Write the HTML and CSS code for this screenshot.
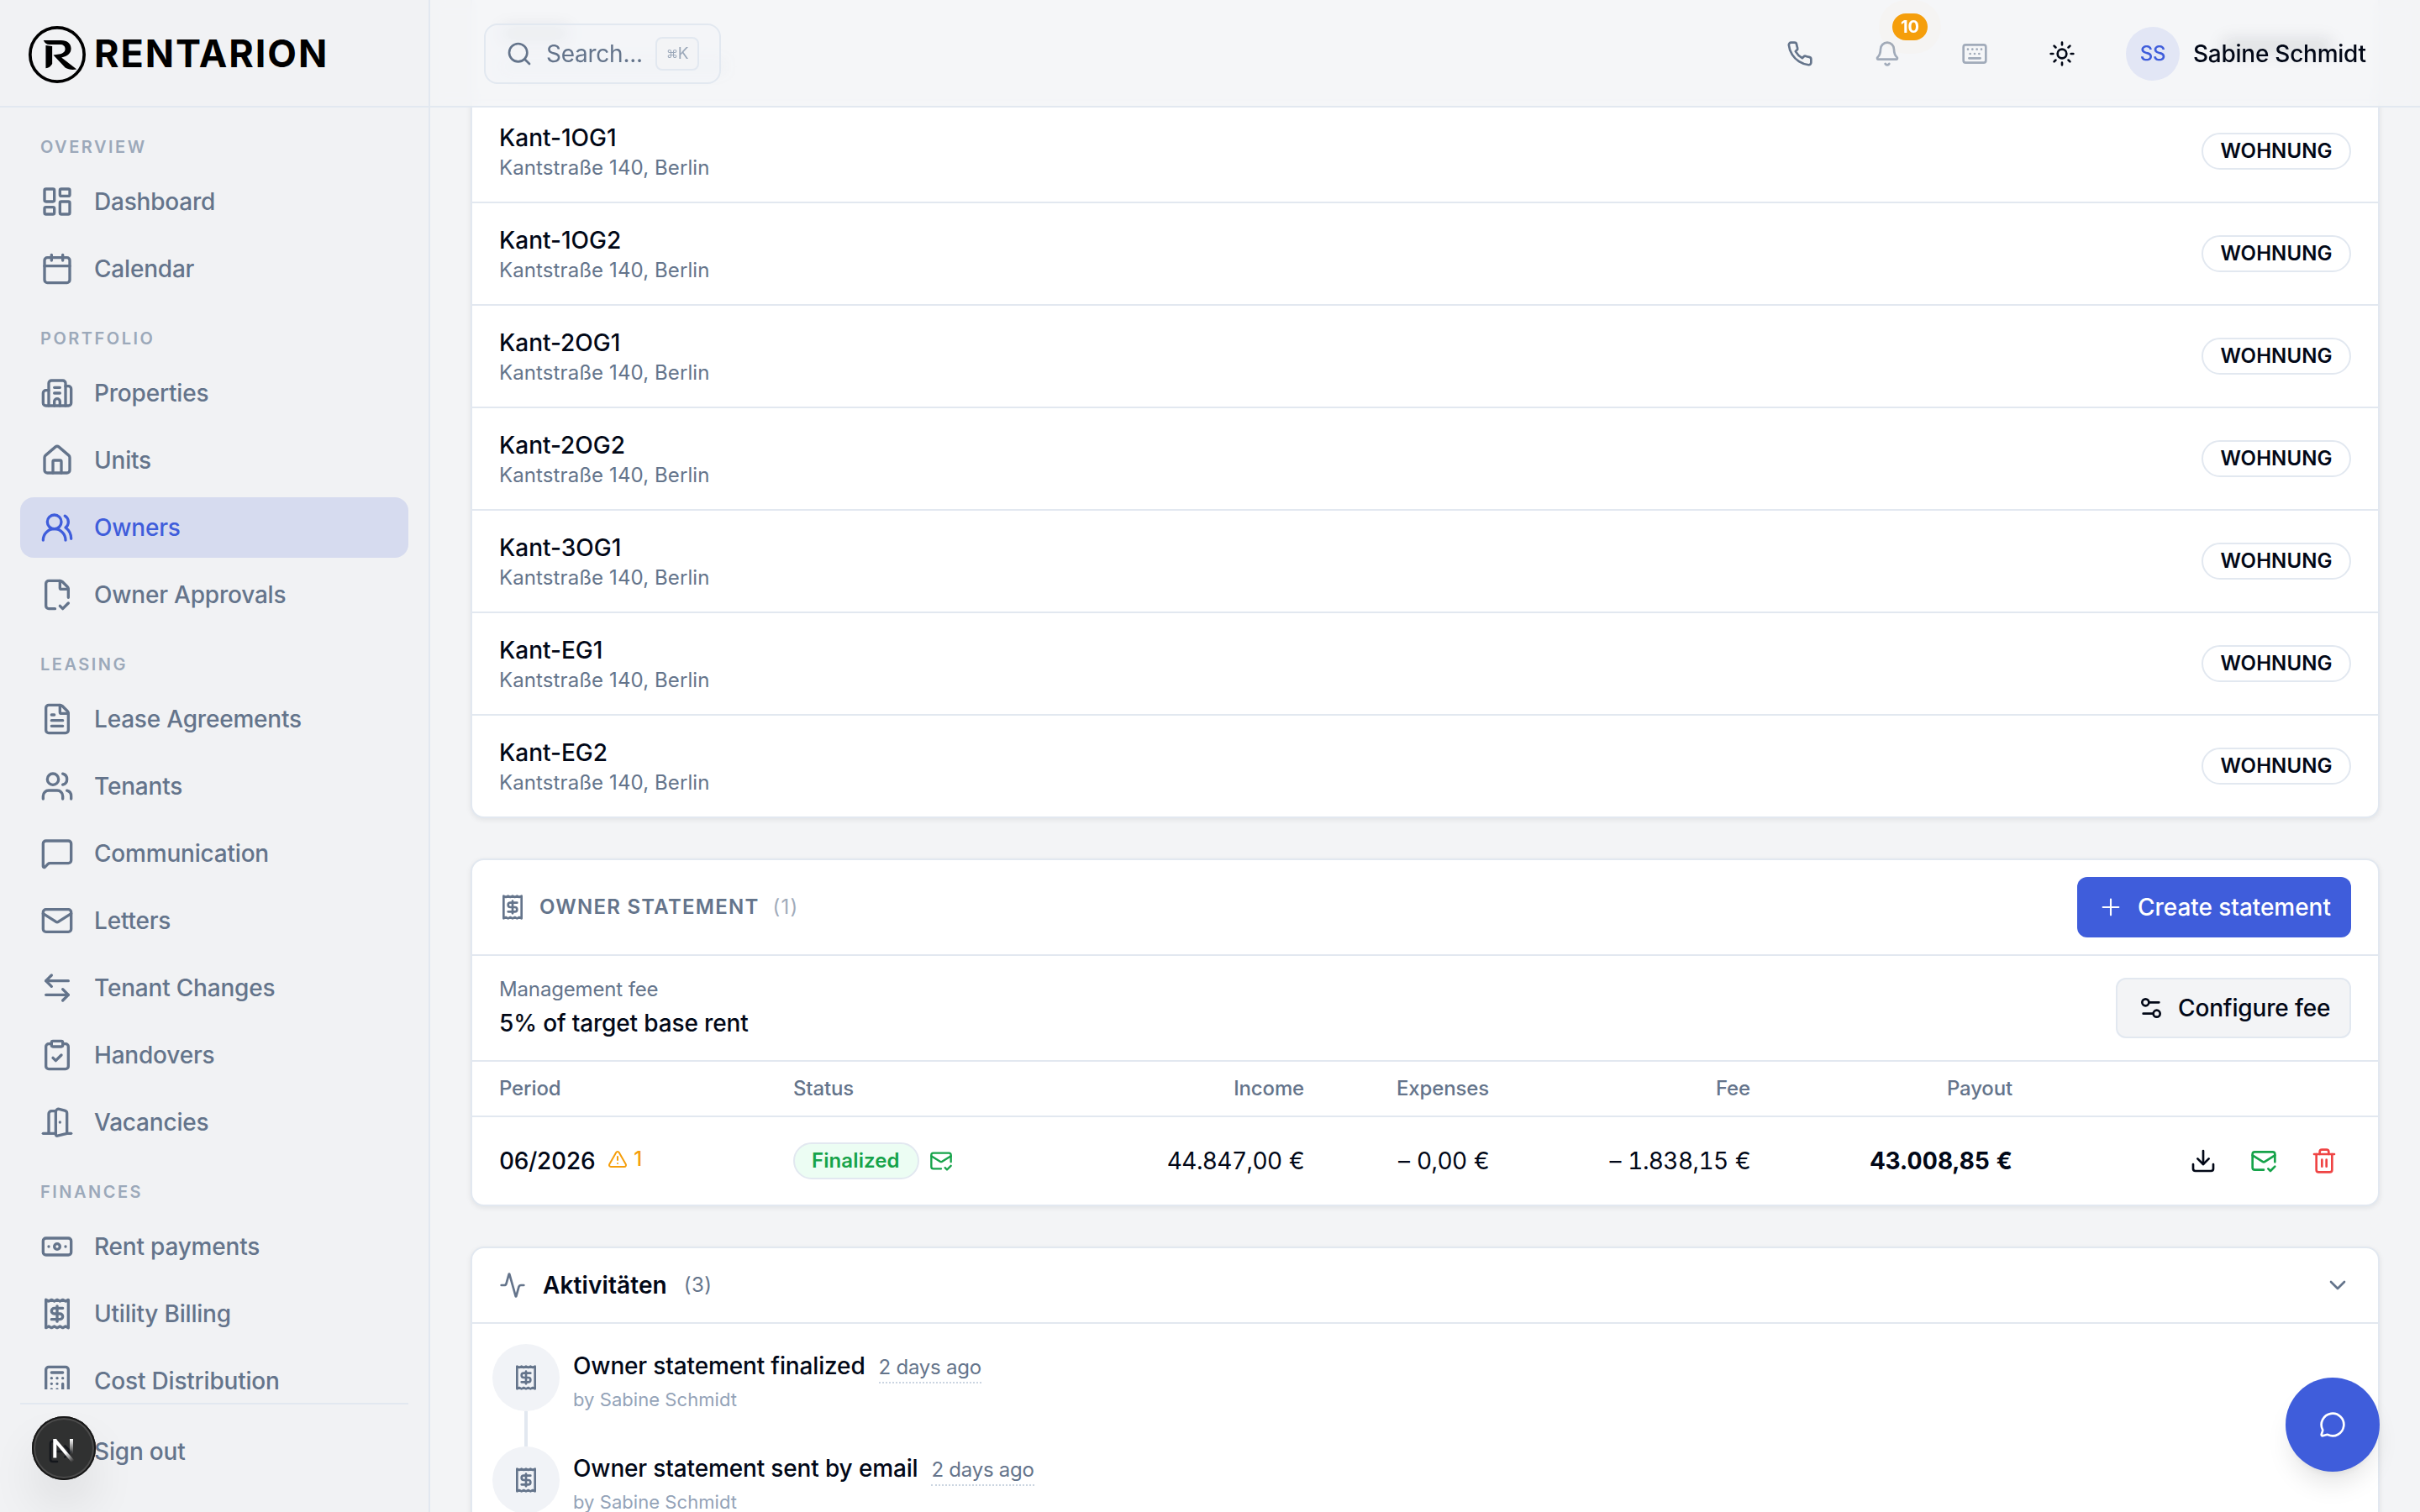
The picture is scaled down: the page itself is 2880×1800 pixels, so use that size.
FILE: index.html
```html
<!DOCTYPE html>
<html lang="en">
<head>
    <meta charset="UTF-8">
    <meta name="viewport" content="width=device-width, initial-scale=1.0">
    <title>Rentarion - Owners</title>
    <link rel="stylesheet" href="styles.css">
</head>
<body>
    <!-- Icons used more than once -->
    <svg class="sprite">
        <symbol id="i-receipt" viewBox="0 0 24 24"><path d="M4 2v20l2-1 2 1 2-1 2 1 2-1 2 1 2-1 2 1V2l-2 1-2-1-2 1-2-1-2 1-2-1-2 1Z"/><path d="M16 8h-6a2 2 0 1 0 0 4h4a2 2 0 1 1 0 4H8"/><path d="M12 17.5v-11"/></symbol>
        <symbol id="i-mailcheck" viewBox="0 0 24 24"><path d="M22 13V6a2 2 0 0 0-2-2H4a2 2 0 0 0-2 2v12c0 1.1.9 2 2 2h8"/><path d="m22 7-8.97 5.7a1.94 1.94 0 0 1-2.06 0L2 7"/><path d="m16 19 2 2 4-4"/></symbol>
    </svg>

    <div class="app">
        <aside class="sidebar">
            <div class="logo">
                <svg class="logo-mark" viewBox="0 0 203 203">
                    <circle cx="101.5" cy="101.5" r="96"/>
                    <path d="M53 51h62c23 0 36 12 36 29 0 17-13 28-34 32l54 42c-16 3-30 1-41-6L88 103l20-3c15-3 22-9 22-19 0-9-7-15-18-15H74c-10 0-16-5-21-15Z"/>
                    <path d="M61 69l23 3v62c-5 9-13 15-23 16Z"/>
                </svg>
                <span class="logo-text">RENTARION</span>
            </div>

            <nav class="menu">
                <p class="menu-label">OVERVIEW</p>
                <a class="menu-item"><svg viewBox="0 0 24 24"><rect width="7" height="9" x="3" y="3" rx="1"/><rect width="7" height="5" x="14" y="3" rx="1"/><rect width="7" height="9" x="14" y="12" rx="1"/><rect width="7" height="5" x="3" y="16" rx="1"/></svg>Dashboard</a>
                <a class="menu-item"><svg viewBox="0 0 24 24"><path d="M8 2v4M16 2v4"/><rect width="18" height="18" x="3" y="4" rx="2"/><path d="M3 10h18"/></svg>Calendar</a>

                <p class="menu-label">PORTFOLIO</p>
                <a class="menu-item"><svg viewBox="0 0 24 24"><path d="M10 12h4M10 8h4"/><path d="M14 21v-3a2 2 0 0 0-4 0v3"/><path d="M6 10H4a2 2 0 0 0-2 2v7a2 2 0 0 0 2 2h16a2 2 0 0 0 2-2V9a2 2 0 0 0-2-2h-2"/><path d="M6 21V5a2 2 0 0 1 2-2h8a2 2 0 0 1 2 2v16"/></svg>Properties</a>
                <a class="menu-item"><svg viewBox="0 0 24 24"><path d="M15 21v-8a1 1 0 0 0-1-1h-4a1 1 0 0 0-1 1v8"/><path d="M3 10a2 2 0 0 1 .709-1.528l7-6a2 2 0 0 1 2.582 0l7 6A2 2 0 0 1 21 10v9a2 2 0 0 1-2 2H5a2 2 0 0 1-2-2z"/></svg>Units</a>
                <a class="menu-item active"><svg viewBox="0 0 24 24"><path d="M18 21a8 8 0 0 0-16 0"/><circle cx="10" cy="8" r="5"/><path d="M22 20c0-3.37-2-6.5-4-8a5 5 0 0 0-.45-8.3"/></svg>Owners</a>
                <a class="menu-item"><svg viewBox="0 0 24 24"><path d="M10.5 22H6a2 2 0 0 1-2-2V4a2 2 0 0 1 2-2h8a2.4 2.4 0 0 1 1.706.706l3.588 3.588A2.4 2.4 0 0 1 20 8v6"/><path d="M14 2v5a1 1 0 0 0 1 1h5"/><path d="m14 20 2 2 4-4"/></svg>Owner Approvals</a>

                <p class="menu-label">LEASING</p>
                <a class="menu-item"><svg viewBox="0 0 24 24"><path d="M6 22a2 2 0 0 1-2-2V4a2 2 0 0 1 2-2h8a2.4 2.4 0 0 1 1.704.706l3.588 3.588A2.4 2.4 0 0 1 20 8v12a2 2 0 0 1-2 2z"/><path d="M14 2v5a1 1 0 0 0 1 1h5"/><path d="M10 9H8M16 13H8M16 17H8"/></svg>Lease Agreements</a>
                <a class="menu-item"><svg viewBox="0 0 24 24"><path d="M16 21v-2a4 4 0 0 0-4-4H6a4 4 0 0 0-4 4v2"/><path d="M16 3.128a4 4 0 0 1 0 7.744"/><path d="M22 21v-2a4 4 0 0 0-3-3.87"/><circle cx="9" cy="7" r="4"/></svg>Tenants</a>
                <a class="menu-item"><svg viewBox="0 0 24 24"><path d="M22 17a2 2 0 0 1-2 2H6.828a2 2 0 0 0-1.414.586l-2.202 2.202A.71.71 0 0 1 2 21.286V5a2 2 0 0 1 2-2h16a2 2 0 0 1 2 2z"/></svg>Communication</a>
                <a class="menu-item"><svg viewBox="0 0 24 24"><path d="m22 7-8.991 5.727a2 2 0 0 1-2.009 0L2 7"/><rect x="2" y="4" width="20" height="16" rx="2"/></svg>Letters</a>
                <a class="menu-item"><svg viewBox="0 0 24 24"><path d="M8 3 4 7l4 4"/><path d="M4 7h16"/><path d="m16 21 4-4-4-4"/><path d="M20 17H4"/></svg>Tenant Changes</a>
                <a class="menu-item"><svg viewBox="0 0 24 24"><rect width="8" height="4" x="8" y="2" rx="1"/><path d="M16 4h2a2 2 0 0 1 2 2v14a2 2 0 0 1-2 2H6a2 2 0 0 1-2-2V6a2 2 0 0 1 2-2h2"/><path d="m9 14 2 2 4-4"/></svg>Handovers</a>
                <a class="menu-item"><svg viewBox="0 0 24 24"><path d="M11 20H2"/><path d="M11 4.562v16.157a1 1 0 0 0 1.242.97L19 20V5.562a2 2 0 0 0-1.515-1.94l-4-1A2 2 0 0 0 11 4.561z"/><path d="M11 4H8a2 2 0 0 0-2 2v14"/><path d="M14 12h.01"/><path d="M22 20h-3"/></svg>Vacancies</a>

                <p class="menu-label">FINANCES</p>
                <a class="menu-item"><svg viewBox="0 0 24 24"><rect width="20" height="12" x="2" y="6" rx="2"/><circle cx="12" cy="12" r="2"/><path d="M6 12h.01M18 12h.01"/></svg>Rent payments</a>
                <a class="menu-item"><svg><use href="#i-receipt"/></svg>Utility Billing</a>
                <a class="menu-item"><svg viewBox="0 0 24 24"><rect width="16" height="20" x="4" y="2" rx="2"/><path d="M8 6h8M16 14v4M16 10h.01M12 10h.01M8 10h.01M12 14h.01M8 14h.01M12 18h.01M8 18h.01"/></svg>Cost Distribution</a>
            </nav>

            <div class="sidebar-footer">
                <a class="menu-item sign-out"><svg viewBox="0 0 24 24"><path d="m16 17 5-5-5-5"/><path d="M21 12H9"/><path d="M9 21H5a2 2 0 0 1-2-2V5a2 2 0 0 1 2-2h4"/></svg>Sign out</a>
            </div>
        </aside>

        <main class="main">
            <header class="topbar">
                <!-- soft traces of the scrolled content -->
                <i class="trace trace-title"></i>
                <i class="trace trace-sub"></i>
                <i class="trace trace-badge"></i>

                <div class="search">
                    <svg viewBox="0 0 24 24"><circle cx="11" cy="11" r="8"/><path d="m21 21-4.34-4.34"/></svg>
                    <span class="search-text">Search...</span>
                    <kbd><span class="cmd">⌘</span>K</kbd>
                </div>
                <div class="topbar-right">
                    <button class="icon-btn"><svg viewBox="0 0 24 24"><path d="M22 16.92v3a2 2 0 0 1-2.18 2 19.79 19.79 0 0 1-8.63-3.07 19.5 19.5 0 0 1-6-6 19.79 19.79 0 0 1-3.07-8.67A2 2 0 0 1 4.11 2h3a2 2 0 0 1 2 1.72 12.84 12.84 0 0 0 .7 2.81 2 2 0 0 1-.45 2.11L8.09 9.91a16 16 0 0 0 6 6l1.27-1.27a2 2 0 0 1 2.11-.45 12.84 12.84 0 0 0 2.81.7A2 2 0 0 1 22 16.92z"/></svg></button>
                    <button class="icon-btn muted"><svg viewBox="0 0 24 24"><path d="M10.268 21a2 2 0 0 0 3.464 0"/><path d="M3.262 15.326A1 1 0 0 0 4 17h16a1 1 0 0 0 .74-1.673C19.41 13.956 18 12.499 18 8A6 6 0 0 0 6 8c0 4.499-1.411 5.956-2.738 7.326"/></svg><span class="count">10</span></button>
                    <button class="icon-btn muted"><svg viewBox="0 0 24 24"><path d="M10 8h.01M12 12h.01M14 8h.01M16 12h.01M18 8h.01M6 8h.01M7 16h10M8 12h.01"/><rect width="20" height="16" x="2" y="4" rx="2"/></svg></button>
                    <button class="icon-btn dark"><svg viewBox="0 0 24 24"><circle cx="12" cy="12" r="4"/><path d="M12 2v2M12 20v2M4.93 4.93l1.41 1.41M17.66 17.66l1.41 1.41M2 12h2M20 12h2M6.34 17.66l-1.41 1.41M19.07 4.93l-1.41 1.41"/></svg></button>
                    <div class="user"><span class="avatar">SS</span><span>Sabine Schmidt</span></div>
                </div>
            </header>

            <div class="content">
                <section class="card units">
                    <div class="unit"><div><h4>Kant-1OG1</h4><p>Kantstraße 140, Berlin</p></div><span class="badge">WOHNUNG</span></div>
                    <div class="unit"><div><h4>Kant-1OG2</h4><p>Kantstraße 140, Berlin</p></div><span class="badge">WOHNUNG</span></div>
                    <div class="unit"><div><h4>Kant-2OG1</h4><p>Kantstraße 140, Berlin</p></div><span class="badge">WOHNUNG</span></div>
                    <div class="unit"><div><h4>Kant-2OG2</h4><p>Kantstraße 140, Berlin</p></div><span class="badge">WOHNUNG</span></div>
                    <div class="unit"><div><h4>Kant-3OG1</h4><p>Kantstraße 140, Berlin</p></div><span class="badge">WOHNUNG</span></div>
                    <div class="unit"><div><h4>Kant-EG1</h4><p>Kantstraße 140, Berlin</p></div><span class="badge">WOHNUNG</span></div>
                    <div class="unit"><div><h4>Kant-EG2</h4><p>Kantstraße 140, Berlin</p></div><span class="badge">WOHNUNG</span></div>
                </section>

                <section class="card">
                    <div class="card-head">
                        <svg class="icon"><use href="#i-receipt"/></svg>
                        <h3 class="caps">OWNER STATEMENT</h3>
                        <span class="num light">(1)</span>
                        <button class="btn primary"><svg viewBox="0 0 24 24"><path d="M5 12h14M12 5v14"/></svg>Create statement</button>
                    </div>
                    <div class="fee">
                        <div>
                            <p class="fee-label">Management fee</p>
                            <p class="fee-value">5% of target base rent</p>
                        </div>
                        <button class="btn outline"><svg viewBox="0 0 24 24"><path d="M14 17H5M19 7h-9"/><circle cx="17" cy="17" r="3"/><circle cx="7" cy="7" r="3"/></svg>Configure fee</button>
                    </div>
                    <table class="statements">
                        <thead>
                            <tr>
                                <th class="c-period">Period</th>
                                <th class="c-status">Status</th>
                                <th class="c-income right">Income</th>
                                <th class="c-expenses right">Expenses</th>
                                <th class="c-fee right">Fee</th>
                                <th class="c-payout right">Payout</th>
                                <th></th>
                            </tr>
                        </thead>
                        <tbody>
                            <tr>
                                <td>
                                    <div class="period">06/2026
                                        <span class="warn"><svg viewBox="0 0 24 24"><path d="m21.73 18-8-14a2 2 0 0 0-3.48 0l-8 14A2 2 0 0 0 4 21h16a2 2 0 0 0 1.73-3"/><path d="M12 9v4M12 17h.01"/></svg>1</span>
                                    </div>
                                </td>
                                <td>
                                    <div class="status"><span class="badge green">Finalized</span><svg><use href="#i-mailcheck"/></svg></div>
                                </td>
                                <td class="right">44.847,00 €</td>
                                <td class="right">– 0,00 €</td>
                                <td class="right">– 1.838,15 €</td>
                                <td class="right payout">43.008,85 €</td>
                                <td>
                                    <div class="actions">
                                        <svg viewBox="0 0 24 24"><path d="M12 15V3"/><path d="M21 15v4a2 2 0 0 1-2 2H5a2 2 0 0 1-2-2v-4"/><path d="m7 10 5 5 5-5"/></svg>
                                        <svg class="sent"><use href="#i-mailcheck"/></svg>
                                        <svg class="delete" viewBox="0 0 24 24"><path d="M10 11v6M14 11v6"/><path d="M19 6v14a2 2 0 0 1-2 2H7a2 2 0 0 1-2-2V6"/><path d="M3 6h18"/><path d="M8 6V4a2 2 0 0 1 2-2h4a2 2 0 0 1 2 2v2"/></svg>
                                    </div>
                                </td>
                            </tr>
                        </tbody>
                    </table>
                </section>

                <section class="card activity">
                    <div class="card-head small">
                        <svg class="icon" viewBox="0 0 24 24"><path d="M22 12h-2.48a2 2 0 0 0-1.93 1.46l-2.35 8.36a.25.25 0 0 1-.48 0L9.24 2.18a.25.25 0 0 0-.48 0l-2.35 8.36A2 2 0 0 1 4.49 12H2"/></svg>
                        <h3>Aktivitäten</h3>
                        <span class="num">(3)</span>
                        <svg class="icon chevron" viewBox="0 0 24 24"><path d="m6 9 6 6 6-6"/></svg>
                    </div>
                    <div class="timeline">
                        <div class="event">
                            <div class="rail"><span class="dot"><svg><use href="#i-receipt"/></svg></span><span class="line"></span></div>
                            <div class="event-text">
                                <div class="event-title">Owner statement finalized <time>2 days ago</time></div>
                                <p>by Sabine Schmidt</p>
                            </div>
                        </div>
                        <div class="event">
                            <div class="rail"><span class="dot"><svg><use href="#i-receipt"/></svg></span><span class="line"></span></div>
                            <div class="event-text">
                                <div class="event-title">Owner statement sent by email <time>2 days ago</time></div>
                                <p>by Sabine Schmidt</p>
                            </div>
                        </div>
                    </div>
                </section>
            </div>
        </main>
    </div>

    <button class="chat"><svg viewBox="0 0 24 24"><path d="M2.992 16.342a2 2 0 0 1 .094 1.167l-1.065 3.29a1 1 0 0 0 1.236 1.168l3.413-.998a2 2 0 0 1 1.099.092 10 10 0 1 0-4.777-4.719"/></svg></button>

    <div class="dev-badge">
        <svg viewBox="0 0 76 76">
            <defs>
                <linearGradient id="g1" x1="42" y1="42" x2="50" y2="53" gradientUnits="userSpaceOnUse"><stop stop-color="#fff"/><stop offset="1" stop-color="#fff" stop-opacity="0"/></linearGradient>
                <linearGradient id="g2" x1="0" y1="27" x2="0" y2="45" gradientUnits="userSpaceOnUse"><stop stop-color="#fff"/><stop offset="1" stop-color="#fff" stop-opacity="0"/></linearGradient>
            </defs>
            <line x1="27.3" y1="27" x2="27.3" y2="49.5" stroke="#fff" stroke-width="4"/>
            <line x1="27" y1="28" x2="49" y2="54" stroke="url(#g1)" stroke-width="4"/>
            <line x1="47" y1="27" x2="47" y2="45" stroke="url(#g2)" stroke-width="4"/>
        </svg>
    </div>
</body>
</html>
```
FILE: styles.css
```css
* {
    box-sizing: border-box;
    margin: 0;
    padding: 0;
}

body {
    height: 1800px;
    overflow: hidden;
    background: #f3f4f6;
    color: #020817;
    font-family: Inter, "Liberation Sans", sans-serif;
    font-size: 28px;
    line-height: 40px;
    letter-spacing: -0.15px;
}

svg {
    display: block;
    flex: none;
    width: 32px;
    height: 32px;
    fill: none;
    stroke: currentColor;
    stroke-width: 2;
    stroke-linecap: round;
    stroke-linejoin: round;
}

button {
    border: none;
    background: none;
    font: inherit;
    letter-spacing: inherit;
    color: inherit;
}

.sprite {
    position: absolute;
    width: 0;
    height: 0;
}

.app {
    display: flex;
    height: 1800px;
}

/* sidebar */
.sidebar {
    display: flex;
    flex-direction: column;
    flex: none;
    width: 512px;
    height: 1800px;
    background: #f1f2f4;
    border-right: 2px solid #e2e8f0;
}

.logo {
    display: flex;
    align-items: center;
    flex: none;
    gap: 10px;
    height: 128px;
    padding-left: 34px;
    border-bottom: 2px solid #e2e8f0;
    color: #000;
}

.logo-mark {
    width: 68px;
    height: 68px;
    margin-top: 4px;
}

.logo-mark circle {
    stroke-width: 11;
}

.logo-mark path {
    fill: #000;
    stroke: none;
}

.logo-text {
    font-size: 45px;
    font-weight: 700;
    letter-spacing: 1.9px;
    margin-top: 2px;
}

.menu {
    display: flex;
    flex-direction: column;
    gap: 8px;
    height: 1526px;
    padding: 32px 24px 0;
    overflow: hidden;
}

.menu-label {
    flex: none;
    height: 36px;
    padding-left: 24px;
    line-height: 30px;
    font-size: 20px;
    font-weight: 600;
    letter-spacing: 2.5px;
    color: #9ca9ba;
}

.menu-item + .menu-label {
    margin-top: 24px;
}

.menu-item {
    display: flex;
    align-items: center;
    flex: none;
    gap: 24px;
    height: 72px;
    padding: 0 24px;
    border-radius: 16px;
    font-weight: 500;
    letter-spacing: -0.2px;
    color: #64748b;
}

.menu-item svg {
    width: 40px;
    height: 40px;
}

.menu-item.active {
    background: #d6dbef;
    color: #3f5ddb;
}

.sidebar-footer {
    margin: 16px 24px 0;
    padding-top: 20px;
    border-top: 2px solid #e2e8f0;
}

.sign-out svg {
    width: 32px;
    height: 32px;
    margin-left: 8px;
}

/* top bar */
.main {
    position: relative;
    flex: 1;
}

.topbar {
    position: absolute;
    top: 0;
    left: 0;
    right: 0;
    z-index: 2;
    display: flex;
    align-items: center;
    justify-content: space-between;
    height: 128px;
    padding: 2px 64px 0;
    background: rgba(243, 244, 246, 0.8);
    border-bottom: 2px solid #e2e8f0;
    backdrop-filter: blur(8px);
}

.trace {
    position: absolute;
    border-radius: 8px;
    filter: blur(9px);
}

.trace-title {
    left: 84px;
    top: 30px;
    width: 82px;
    height: 20px;
    background: rgba(2, 8, 23, 0.07);
}

.trace-sub {
    left: 84px;
    top: 72px;
    width: 268px;
    height: 14px;
    background: rgba(100, 116, 139, 0.06);
}

.trace-badge {
    right: 104px;
    top: 46px;
    width: 132px;
    height: 18px;
    background: rgba(2, 8, 23, 0.1);
}

.search {
    position: relative;
    display: flex;
    align-items: center;
    width: 282px;
    height: 72px;
    padding: 0 24px;
    border: 2px solid #e2e8f0;
    border-radius: 16px;
    background: rgba(243, 245, 249, 0.5);
    color: #64748b;
}

.search-text {
    margin-left: 16px;
    width: 130px;
    letter-spacing: -0.25px;
}

.search kbd {
    display: flex;
    align-items: center;
    justify-content: center;
    width: 52px;
    height: 40px;
    border: 2px solid #e2e8f0;
    border-radius: 8px;
    background: #f3f4f6;
    font-family: Inter, sans-serif;
    font-size: 19px;
    letter-spacing: -0.5px;
    color: #9ca9ba;
}

.cmd {
    font-family: Inter, "DejaVu Sans", sans-serif;
    font-size: 14px;
}

.topbar-right {
    position: relative;
    display: flex;
    align-items: center;
    gap: 32px;
}

.icon-btn {
    position: relative;
    display: flex;
    align-items: center;
    justify-content: center;
    width: 72px;
    height: 72px;
    color: #64748b;
}

.icon-btn.muted {
    color: #a1abba;
}

.icon-btn.dark {
    color: #020817;
}

.count {
    position: absolute;
    top: -12px;
    left: 42px;
    width: 42px;
    height: 32px;
    border-radius: 16px;
    background: #f59e0b;
    box-shadow: 0 0 0 16px rgba(245, 158, 11, 0.02);
    font-size: 20px;
    font-weight: 700;
    line-height: 32px;
    text-align: center;
    color: #fff;
}

.user {
    display: flex;
    align-items: center;
    gap: 16px;
    margin-left: 8px;
    font-weight: 500;
    letter-spacing: -0.25px;
    white-space: nowrap;
}

.avatar {
    width: 64px;
    height: 64px;
    border-radius: 50%;
    background: #e2e6f5;
    color: #3f5ddb;
    font-size: 24px;
    line-height: 64px;
    text-align: center;
}

.user span:last-child {
    width: 206px;
}

/* cards */
.content {
    padding: 0 48px;
}

.card {
    margin-bottom: 48px;
    border: 2px solid #e2e8f0;
    border-radius: 16px;
    background: #fff;
    box-shadow: 0 2px 6px rgba(15, 23, 42, 0.08);
}

.units {
    padding-top: 118px;
    border-top: none;
    border-radius: 0 0 16px 16px;
}

.unit {
    display: flex;
    align-items: center;
    justify-content: space-between;
    height: 122px;
    padding: 0 32px;
    border-top: 2px solid #e2e8f0;
}

.unit h4 {
    font-size: 28px;
    font-weight: 500;
    letter-spacing: 0;
}

.unit p {
    font-size: 24px;
    line-height: 32px;
    letter-spacing: 0.1px;
    color: #64748b;
}

.badge {
    display: flex;
    align-items: center;
    height: 44px;
    padding: 0 20px;
    border: 2px solid #e2e8f0;
    border-radius: 22px;
    font-size: 24px;
    font-weight: 600;
    letter-spacing: 0.1px;
}

.unit .badge {
    justify-content: center;
    width: 178px;
}

.card-head {
    display: flex;
    align-items: center;
    height: 114px;
    padding: 0 32px;
    border-bottom: 2px solid #e2e8f0;
}

.card-head.small {
    height: 90px;
}

.card-head h3 {
    margin-left: 20px;
    font-size: 28px;
    font-weight: 600;
    letter-spacing: 0.1px;
}

.card-head .caps {
    margin-left: 16px;
    font-size: 24px;
    letter-spacing: 1.25px;
    color: #64748b;
}

.icon {
    color: #64748b;
}

.num {
    margin-left: 20px;
    font-size: 24px;
    letter-spacing: 0.4px;
    color: #64748b;
}

.num.light {
    margin-left: 16px;
    letter-spacing: 1.2px;
    color: #a1abba;
}

.btn {
    display: flex;
    align-items: center;
    gap: 16px;
    height: 72px;
    padding: 0 24px;
    border-radius: 12px;
    font-weight: 500;
    white-space: nowrap;
}

.btn.primary {
    width: 326px;
    margin-left: auto;
    background: #3f5ddb;
    letter-spacing: -0.05px;
    color: #fff;
}

.btn.primary svg {
    stroke-width: 1.6;
}

.btn.outline {
    width: 280px;
    border: 2px solid #e2e8f0;
    background: #f3f4f6;
}

.chevron {
    margin-left: auto;
}

.fee {
    display: flex;
    align-items: center;
    justify-content: space-between;
    height: 126px;
    padding: 0 32px;
    border-bottom: 2px solid #e2e8f0;
}

.fee-label {
    font-size: 24px;
    line-height: 32px;
    color: #64748b;
}

.fee-value {
    margin-top: 4px;
    font-weight: 500;
    letter-spacing: -0.15px;
}

/* table */
.statements {
    width: 100%;
    table-layout: fixed;
    border-collapse: separate;
    border-spacing: 0;
    font-variant-numeric: tabular-nums;
}

.statements th {
    height: 66px;
    padding: 0 32px;
    border-bottom: 2px solid #e2e8f0;
    font-size: 24px;
    font-weight: 500;
    text-align: left;
    color: #64748b;
}

.statements td {
    height: 104px;
    padding: 0 32px;
    letter-spacing: -0.6px;
    word-spacing: 1.5px;
    white-space: nowrap;
}

.statements .right {
    text-align: right;
}

.c-period {
    width: 350px;
}

.c-status {
    width: 320px;
}

.c-income {
    width: 352px;
}

.c-expenses {
    width: 220px;
}

.c-fee {
    width: 311px;
}

.c-payout {
    width: 312px;
}

.statements .payout {
    font-weight: 700;
    letter-spacing: 0.1px;
    word-spacing: 0;
}

.period {
    display: flex;
    align-items: center;
    gap: 15px;
    font-weight: 500;
    letter-spacing: -0.7px;
}

.warn {
    display: flex;
    align-items: center;
    gap: 7px;
    margin-bottom: 4px;
    font-size: 24px;
    font-variant-numeric: normal;
    color: #f59e0b;
}

.warn svg {
    width: 24px;
    height: 24px;
}

.status {
    display: flex;
    align-items: center;
    gap: 12px;
    color: #16a34a;
}

.status svg {
    width: 28px;
    height: 28px;
}

.badge.green {
    width: 150px;
    background: #ecfdf3;
}

.actions {
    display: flex;
    justify-content: flex-end;
    gap: 40px;
    padding-right: 16px;
}

.sent {
    color: #16a34a;
}

.delete {
    color: #ef4444;
}

/* activity */
.activity {
    height: 400px;
}

.timeline {
    padding: 24px;
}

.event {
    display: flex;
    gap: 16px;
    height: 122px;
}

.rail {
    display: flex;
    flex-direction: column;
    align-items: center;
    width: 80px;
}

.dot {
    display: flex;
    align-items: center;
    justify-content: center;
    flex: none;
    width: 80px;
    height: 80px;
    border-radius: 50%;
    background: #f1f3f7;
    color: #64748b;
}

.line {
    flex: 1;
    width: 4px;
    background: #e2e8f0;
}

.event-text {
    padding-top: 6px;
}

.event-title {
    display: flex;
    align-items: baseline;
    gap: 16px;
    font-weight: 500;
}

.event-title time {
    border-bottom: 2px dotted #cbd5e1;
    font-size: 24px;
    font-weight: 400;
    line-height: 34px;
    letter-spacing: -0.25px;
    color: #64748b;
}

.event-text p {
    margin-top: 3px;
    font-size: 22px;
    line-height: 32px;
    letter-spacing: 0.05px;
    color: #94a3b8;
}

/* floating buttons */
.chat {
    position: fixed;
    right: 48px;
    bottom: 48px;
    z-index: 5;
    display: flex;
    align-items: center;
    justify-content: center;
    width: 112px;
    height: 112px;
    border-radius: 50%;
    background: #3f5ddb;
    box-shadow: 0 20px 30px -6px rgba(0, 0, 0, 0.1), 0 8px 12px -8px rgba(0, 0, 0, 0.1);
    color: #fff;
}

.dev-badge {
    position: fixed;
    left: 38px;
    bottom: 38px;
    z-index: 5;
    width: 76px;
    height: 76px;
    border-radius: 50%;
    background: rgba(0, 0, 0, 0.8);
    box-shadow: inset 0 0 0 2px #171717, inset 0 0 0 4px #4b4b4b, 0 32px 64px -16px rgba(0, 0, 0, 0.24);
}

.dev-badge svg {
    width: 76px;
    height: 76px;
    stroke-linecap: butt;
}
```
